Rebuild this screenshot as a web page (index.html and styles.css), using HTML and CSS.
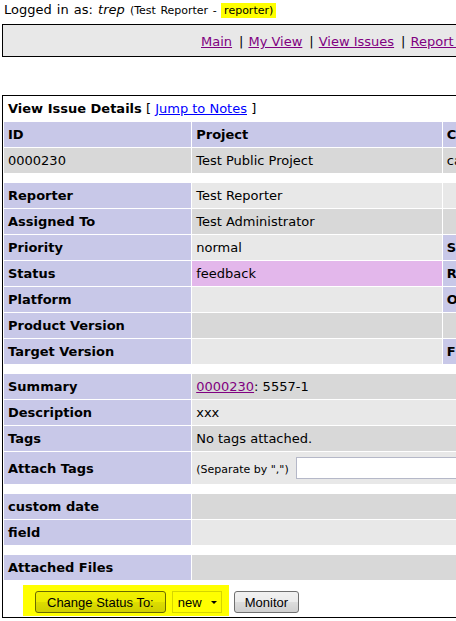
FILE: index.html
```html
<!DOCTYPE html>
<html>
<head>
    <title>0000230: 5557-1 - MantisBT</title>
    <link rel="stylesheet" href="styles.css">
</head>
<body>
    <div class="login-info">
        Logged in as: <i>trep</i> <span class="small">(Test Reporter - <span class="access-level">reporter)</span></span>
    </div>

    <div class="menu">
        <a class="visited" href="#">Main</a><span class="sep">|</span><a class="visited" href="#">My View</a><span class="sep">|</span><a class="visited" href="#">View Issues</a><span class="sep">|</span><a class="visited" href="#">Report Issue</a><span class="sep">|</span><a class="visited" href="#">Change Log</a><span class="sep">|</span><a class="visited" href="#">Roadmap</a><span class="sep">|</span><a class="visited" href="#">Summary</a><span class="sep">|</span><a class="visited" href="#">Docs</a><span class="sep">|</span><a class="visited" href="#">My Account</a><span class="sep">|</span><a class="visited" href="#">Logout</a>
    </div>

    <table class="details">
        <colgroup>
            <col class="w15"><col class="w20"><col class="w15"><col class="w15"><col class="w15"><col class="w20">
        </colgroup>
        <tr>
            <td class="form-title" colspan="6">
                <b>View Issue Details</b>&nbsp;[&nbsp;<a href="#bugnotes">Jump to Notes</a>&nbsp;]
            </td>
        </tr>
        <tr>
            <td class="category">ID</td>
            <td class="category">Project</td>
            <td class="category">Category</td>
            <td class="category">View Status</td>
            <td class="category">Date Submitted</td>
            <td class="category">Last Update</td>
        </tr>
        <tr class="row-1">
            <td>0000230</td>
            <td>Test Public Project</td>
            <td>category1</td>
            <td>public</td>
            <td>2010-05-06 10:21</td>
            <td>2010-05-06 10:23</td>
        </tr>
        <tr class="spacer"><td colspan="6"></td></tr>

        <tr class="row-2">
            <td class="category">Reporter</td>
            <td>Test Reporter</td>
            <td colspan="4"></td>
        </tr>
        <tr class="row-1">
            <td class="category">Assigned To</td>
            <td>Test Administrator</td>
            <td colspan="4"></td>
        </tr>
        <tr class="row-2">
            <td class="category">Priority</td>
            <td>normal</td>
            <td class="category">Severity</td>
            <td>minor</td>
            <td class="category">Reproducibility</td>
            <td>have not tried</td>
        </tr>
        <tr class="row-1">
            <td class="category">Status</td>
            <td class="status-feedback">feedback</td>
            <td class="category">Resolution</td>
            <td>open</td>
            <td colspan="2"></td>
        </tr>
        <tr class="row-2">
            <td class="category">Platform</td>
            <td></td>
            <td class="category">OS</td>
            <td></td>
            <td class="category">OS Version</td>
            <td></td>
        </tr>
        <tr class="row-1">
            <td class="category">Product Version</td>
            <td></td>
            <td colspan="4"></td>
        </tr>
        <tr class="row-2">
            <td class="category">Target Version</td>
            <td></td>
            <td class="category">Fixed in Version</td>
            <td></td>
            <td colspan="2"></td>
        </tr>
        <tr class="spacer"><td colspan="6"></td></tr>

        <tr class="row-1">
            <td class="category">Summary</td>
            <td colspan="5"><a class="visited" href="#">0000230</a>: 5557-1</td>
        </tr>
        <tr class="row-2">
            <td class="category">Description</td>
            <td colspan="5">xxx</td>
        </tr>
        <tr class="row-1">
            <td class="category">Tags</td>
            <td colspan="5">No tags attached.</td>
        </tr>
        <tr class="row-2">
            <td class="category">Attach Tags</td>
            <td colspan="5">
                <span class="small">(Separate by ",")</span>
                <input type="text" class="tag-input" size="40">
                <input type="submit" class="button" value="Attach">
            </td>
        </tr>
        <tr class="spacer"><td colspan="6"></td></tr>

        <tr class="row-1">
            <td class="category">custom date</td>
            <td colspan="5"></td>
        </tr>
        <tr class="row-2">
            <td class="category">field</td>
            <td colspan="5"></td>
        </tr>
        <tr class="spacer"><td colspan="6"></td></tr>

        <tr class="row-1">
            <td class="category">Attached Files</td>
            <td colspan="5"></td>
        </tr>
        <tr>
            <td class="button-cell" colspan="6">
                <div class="button-bar">
                    <div class="marked">
                        <button class="button">Change Status To:</button>
                        <span class="select-wrap">
                            <select class="select">
                                <option>new</option>
                                <option>feedback</option>
                                <option>acknowledged</option>
                                <option>confirmed</option>
                            </select>
                        </span>
                    </div>
                    <button class="button monitor">Monitor</button>
                </div>
            </td>
        </tr>
    </table>
</body>
</html>
```

FILE: styles.css
```css
html, body {
    overflow: hidden;
}
body {
    margin: 0;
    padding: 2px 2px 0;
    font-family: "DejaVu Sans", Verdana, sans-serif;
    font-size: 13px;
    line-height: 15px;
    color: #000;
    background-color: #fff;
}
a { color: #0000ff; }
a.visited { color: #800080; }
.small { font-size: 11px; }

.login-info {
    padding-left: 2px;
    white-space: nowrap;
    word-spacing: 1px;
}
.access-level {
    background-color: #ffff00;
    padding: 1px 3px;
}

/* barra del menu principal */
.menu {
    width: 1660px;
    margin-top: 6px;
    padding: 9px 0 7px 198px;
    border: 1px solid #000;
    background-color: #e8e8e8;
    white-space: nowrap;
}
.menu .sep {
    margin: 0 5px 0 7px;
}

/* tabla de detalles */
.details {
    width: 1257px;
    margin-top: 38px;
    table-layout: fixed;
    border: 1px solid #000;
    border-spacing: 1px;
    background-color: #fff;
}
.details col.w15 { width: 15%; }
.details col.w20 { width: 20%; }
.details td {
    padding: 5px 4px;
    vertical-align: middle;
    white-space: nowrap;
    overflow: hidden;
}
.details td.form-title {
    padding: 4px 4px 5px;
}
.details td.category {
    background-color: #c8c8e8;
    font-weight: bold;
}
.row-1 { background-color: #d8d8d8; }
.row-2 { background-color: #e8e8e8; }
.details td.status-feedback { background-color: #e3b7eb; }
.details tr.spacer td {
    height: 8px;
    padding: 0;
}

.tag-input {
    height: 22px;
    box-sizing: border-box;
    width: 300px;
    margin: 0 0 0 3px;
    border: 1px solid #b5b8c8;
    font: 13px "Liberation Sans", Arial, sans-serif;
    vertical-align: baseline;
}

/* botones de abajo */
.details td.button-cell {
    padding: 4px 0 0 19px;
}
.button-bar {
    display: flex;
    align-items: flex-start;
    gap: 5px;
}
.marked {
    display: flex;
    gap: 6px;
    padding: 6px 7px 3px 12px;
    background-color: #ffff00;
}
.button {
    height: 22px;
    padding: 0 10px;
    border: 1px solid #707070;
    border-radius: 3px;
    background: linear-gradient(#f2f2f2, #ebebeb 50%, #dddddd 50%, #cfcfcf);
    font: 13px "Liberation Sans", Arial, sans-serif;
    color: #000;
}
.button.monitor {
    margin-top: 6px;
}
.marked .button {
    padding: 0 11px;
    border-color: #6a6a00;
    background: linear-gradient(#f2f200, #ebeb00 50%, #dddd00 50%, #cfcf00);
}
.select-wrap {
    position: relative;
    display: block;
}
.select {
    -webkit-appearance: none;
    appearance: none;
    width: 50px;
    height: 22px;
    margin: 0;
    padding: 0 0 0 5px;
    border: 1px solid #d6d600;
    background-color: #ffff00;
    font: 13px "Liberation Sans", Arial, sans-serif;
    color: #000;
}
.select-wrap::after {
    content: "";
    position: absolute;
    top: 10px;
    right: 5px;
    border-left: 3px solid transparent;
    border-right: 3px solid transparent;
    border-top: 3px solid #000;
}
```
